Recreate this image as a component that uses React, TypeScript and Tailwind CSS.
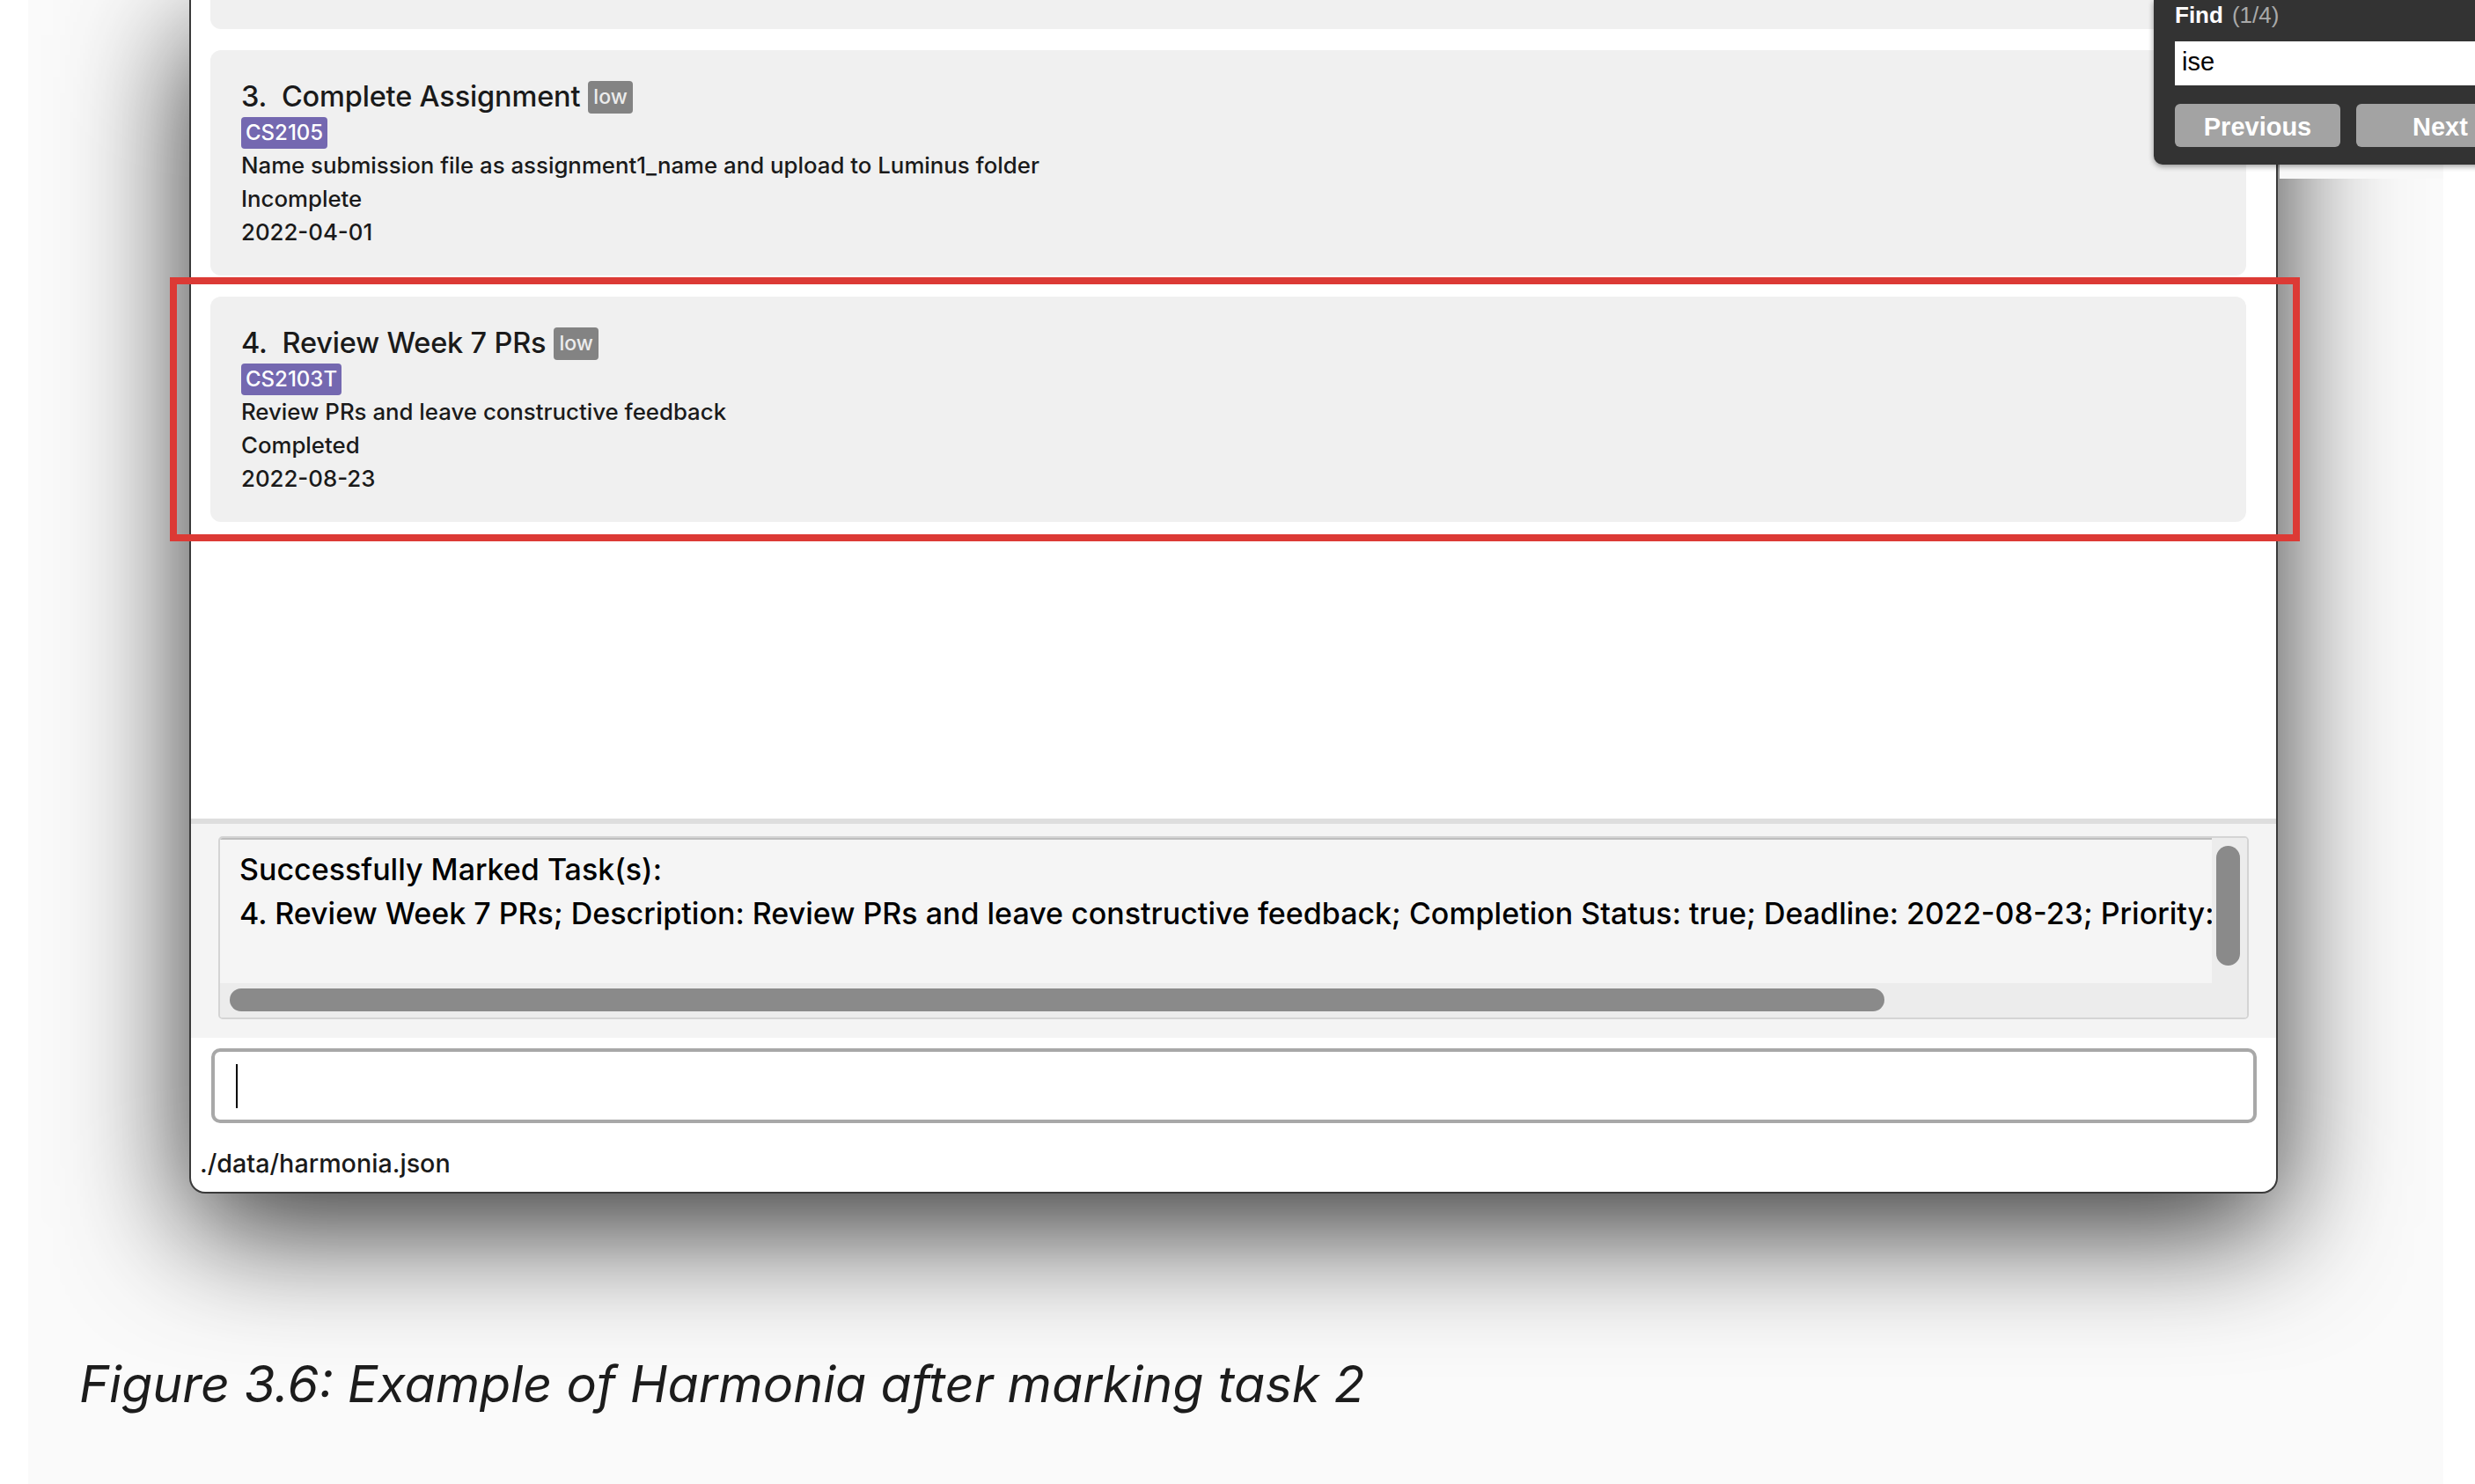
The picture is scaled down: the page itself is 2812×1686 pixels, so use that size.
import React from "react";

type Task = {
  index: number;
  title: string;
  module: string;
  description: string;
  status: string;
  deadline: string;
};

const tasks: Task[] = [
  {
    index: 3,
    title: "Complete Assignment",
    module: "CS2105",
    description: "Name submission file as assignment1_name and upload to Luminus folder",
    status: "Incomplete",
    deadline: "2022-04-01",
  },
  {
    index: 4,
    title: "Review Week 7 PRs",
    module: "CS2103T",
    description: "Review PRs and leave constructive feedback",
    status: "Completed",
    deadline: "2022-08-23",
  },
];

function TaskCard({ task }: { task: Task }) {
  return (
    <div className="rounded-[12px] bg-[#f0f0f0] pl-[35px] pt-[33px] pb-[30px] text-[#1a1a1a]">
      {/* title + priority */}
      <div className="flex items-center h-[40px]">
        <span className="text-[32.5px] leading-[40px] tracking-[-0.005em] whitespace-pre">
          {task.index}.  {task.title}
        </span>
        <span className="ml-[9px] h-[37px] px-[6px] rounded-[4px] bg-[#838383] text-[#ececec] text-[23px] leading-[37px]">
          low
        </span>
      </div>
      <div className="mt-[3px] flex">
        <span className="h-[36px] px-[5px] rounded-[4px] bg-[#7468b0] text-white text-[24px] leading-[36px]">
          {task.module}
        </span>
      </div>
      <div className="text-[25.8px] leading-[38px]">
        <p>{task.description}</p>
        <p>{task.status}</p>
        <p>{task.deadline}</p>
      </div>
    </div>
  );
}

export default function App() {
  return (
    <div className="relative w-[2812px] h-[1686px] overflow-hidden bg-white font-['Inter',sans-serif] font-medium">
      <div className="ml-[32px] w-[2744px] h-full bg-[#fafafa] overflow-hidden flex flex-col">
        {/* app window */}
        <div className="ml-[183px] w-[2373px] h-[1356px] shrink-0 flex flex-col bg-white border-x-2 border-b-2 border-[#3a3a3a] rounded-b-[18px] shadow-[0_40px_140px_rgba(0,0,0,0.8)]">
          {/* task list */}
          <div className="h-[930px] pl-[22px] pr-[34px] flex flex-col gap-[24px] overflow-hidden">
            <div className="h-[33px] shrink-0 rounded-b-[12px] bg-[#f0f0f0]" />
            {tasks.map((t) => (
              <TaskCard key={t.index} task={t} />
            ))}
          </div>

          <div className="h-[6px] bg-[#dedede]" />

          {/* result display */}
          <div className="h-[243px] bg-[#f4f4f4] pt-[14px] px-[31px]">
            <div className="h-[208px] flex flex-col rounded-[5px] border-2 border-[#d4d4d4] overflow-hidden">
              <div className="h-[165px] flex">
                <div className="flex-1 overflow-hidden border-t-2 border-[#bdbdbd] bg-[#f5f5f5] pl-[22px] pt-[9px] text-[34px] leading-[50px] text-black whitespace-nowrap">
                  <p>Successfully Marked Task(s):</p>
                  <p>
                    4. Review Week 7 PRs; Description: Review PRs and leave constructive feedback; Completion Status: true; Deadline: 2022-08-23; Priority: low
                  </p>
                </div>
                <div className="w-[40px] bg-[#ececec] pl-[5px] pt-[9px]">
                  <div className="w-[27px] h-[136px] rounded-full bg-[#8a8a8a]" />
                </div>
              </div>
              <div className="flex-1 bg-[#ececec] pl-[11px] pt-[6px]">
                <div className="w-[1880px] h-[26px] rounded-full bg-[#8a8a8a]" />
              </div>
            </div>
          </div>

          {/* command box */}
          <div className="pt-[12px] pl-[23px] pr-[22px]">
            <div className="h-[85px] rounded-[10px] border-4 border-[#a8a8a8] flex items-center pl-[24px]">
              <div className="w-[2px] h-[50px] bg-black" />
            </div>
          </div>

          {/* status bar */}
          <p className="mt-[28px] ml-[10px] text-[28.7px] leading-[36px] text-[#1a1a1a]">
            ./data/harmonia.json
          </p>
        </div>

        <p className="mt-[182px] ml-[58px] italic font-normal text-[57.5px] leading-[68px] text-[#1c1c1c] whitespace-nowrap">
          Figure 3.6: Example of Harmonia after marking task 2
        </p>
      </div>

      {/* light area right of window, above its shadow */}
      <div className="absolute left-[2590px] top-0 w-[186px] h-[203px] bg-[#f8f8f8]" />

      {/* find popup */}
      <div className="absolute left-[2447px] top-0 w-[420px] h-[187px] rounded-bl-[10px] bg-[#333333] pl-[24px] pt-[2px] font-['Liberation_Sans',Arial,sans-serif] font-normal shadow-[0_2px_6px_rgba(0,0,0,0.4)]">
        <div className="flex items-baseline gap-[10px] h-[30px] text-[26px] leading-[30px]">
          <span className="font-bold text-white">Find</span>
          <span className="text-[#a9a9a9]">(1/4)</span>
        </div>
        <div className="mt-[15px] h-[50px] bg-white pl-[8px] text-[29px] leading-[46px] text-black">ise</div>
        <div className="mt-[21px] flex gap-[18px]">
          <div className="w-[194px] h-[49px] rounded-[6px] bg-[#a3a3a3] text-center text-[29px] leading-[52px] font-bold text-white">
            Previous
          </div>
          <div className="w-[194px] h-[49px] rounded-[6px] bg-[#a3a3a3] pl-[64px] text-[29px] leading-[52px] font-bold text-white">
            Next
          </div>
        </div>
      </div>

      {/* highlight frame */}
      <div className="absolute left-[193px] top-[315px] w-[2420px] h-[300px] border-[8px] border-[#dc3a35]" />
    </div>
  );
}
